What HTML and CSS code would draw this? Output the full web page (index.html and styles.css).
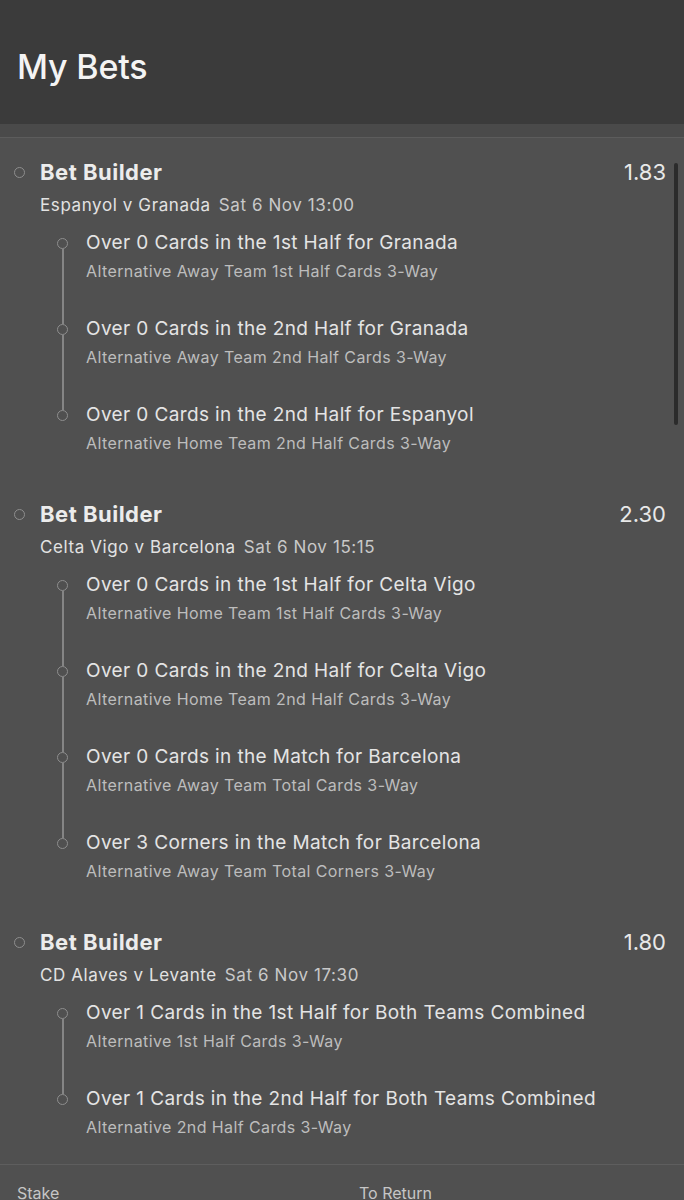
FILE: index.html
```html
<!DOCTYPE html>
<html>
<head>
<meta charset="utf-8">
<link rel="stylesheet" href="styles.css">
</head>
<body>
<header class="topbar"><h1 class="title">My Bets</h1></header>
<div class="strip"></div>
<main class="content">
  <div class="scrollbar"></div>

  <section class="group">
    <div class="group-head">
      <span class="dot"></span>
      <span class="group-name">Bet Builder</span>
      <span class="odds">1.83</span>
    </div>
    <div class="match"><span class="teams">Espanyol v Granada</span><span class="date">Sat 6 Nov 13:00</span></div>
    <div class="legs">
      <div class="leg"><span class="leg-dot"></span><div class="leg-text"><div class="leg-title">Over 0 Cards in the 1st Half for Granada</div><div class="leg-sub">Alternative Away Team 1st Half Cards 3-Way</div></div></div>
      <div class="leg"><span class="leg-dot"></span><div class="leg-text"><div class="leg-title">Over 0 Cards in the 2nd Half for Granada</div><div class="leg-sub">Alternative Away Team 2nd Half Cards 3-Way</div></div></div>
      <div class="leg"><span class="leg-dot"></span><div class="leg-text"><div class="leg-title">Over 0 Cards in the 2nd Half for Espanyol</div><div class="leg-sub">Alternative Home Team 2nd Half Cards 3-Way</div></div></div>
    </div>
  </section>

  <section class="group">
    <div class="group-head">
      <span class="dot"></span>
      <span class="group-name">Bet Builder</span>
      <span class="odds">2.30</span>
    </div>
    <div class="match"><span class="teams">Celta Vigo v Barcelona</span><span class="date">Sat 6 Nov 15:15</span></div>
    <div class="legs">
      <div class="leg"><span class="leg-dot"></span><div class="leg-text"><div class="leg-title">Over 0 Cards in the 1st Half for Celta Vigo</div><div class="leg-sub">Alternative Home Team 1st Half Cards 3-Way</div></div></div>
      <div class="leg"><span class="leg-dot"></span><div class="leg-text"><div class="leg-title">Over 0 Cards in the 2nd Half for Celta Vigo</div><div class="leg-sub">Alternative Home Team 2nd Half Cards 3-Way</div></div></div>
      <div class="leg"><span class="leg-dot"></span><div class="leg-text"><div class="leg-title">Over 0 Cards in the Match for Barcelona</div><div class="leg-sub">Alternative Away Team Total Cards 3-Way</div></div></div>
      <div class="leg"><span class="leg-dot"></span><div class="leg-text"><div class="leg-title">Over 3 Corners in the Match for Barcelona</div><div class="leg-sub">Alternative Away Team Total Corners 3-Way</div></div></div>
    </div>
  </section>

  <section class="group">
    <div class="group-head">
      <span class="dot"></span>
      <span class="group-name">Bet Builder</span>
      <span class="odds">1.80</span>
    </div>
    <div class="match"><span class="teams">CD Alaves v Levante</span><span class="date">Sat 6 Nov 17:30</span></div>
    <div class="legs">
      <div class="leg"><span class="leg-dot"></span><div class="leg-text"><div class="leg-title">Over 1 Cards in the 1st Half for Both Teams Combined</div><div class="leg-sub">Alternative 1st Half Cards 3-Way</div></div></div>
      <div class="leg"><span class="leg-dot"></span><div class="leg-text"><div class="leg-title">Over 1 Cards in the 2nd Half for Both Teams Combined</div><div class="leg-sub">Alternative 2nd Half Cards 3-Way</div></div></div>
    </div>
  </section>
</main>
<footer class="footer">
  <span class="foot-label">Stake</span>
  <span class="foot-label">To Return</span>
</footer>
</body>
</html>
```

FILE: styles.css
```css
* { box-sizing: border-box; margin: 0; padding: 0; }
html, body { background: #505050; }
body {
  font-family: Inter, Roboto, "Noto Sans", sans-serif;
  color: #e6e6e6;
  width: 684px;
  height: 1200px;
  overflow: hidden;
}
.topbar {
  height: 124px;
  background: #3b3b3b;
  display: flex;
  align-items: center;
  padding-left: 17px;
}
.title {
  font-size: 34px;
  font-weight: 500;
  color: #f4f4f4;
  letter-spacing: -0.2px;
  margin-top: 8px;
}
.strip {
  height: 14px;
  background: #4a4a4a;
  border-bottom: 1px solid #5c5c5c;
}
.content {
  position: relative;
  padding-top: 18px;
  height: 1026px;
  overflow: hidden;
}
.scrollbar {
  position: absolute;
  right: 6px;
  top: 25px;
  width: 4px;
  height: 262px;
  border-radius: 2px;
  background: #2b2b2b;
}
.group { padding: 0 18px 11px 14px; }
.group-head {
  display: flex;
  align-items: center;
  height: 32px;
}
.dot {
  width: 11px;
  height: 11px;
  border: 1.5px solid #8e8e8e;
  border-radius: 50%;
  margin-right: 15px;
  flex: none;
}
.group-name {
  font-size: 22px;
  font-weight: 700;
  color: #ececec;
  letter-spacing: 0.5px;
  flex: 1;
}
.odds {
  font-size: 22px;
  font-weight: 400;
  color: #e8e8e8;
}
.match {
  padding-left: 26px;
  height: 33px;
  display: flex;
  align-items: center;
  gap: 8px;
  font-size: 17px;
  letter-spacing: 0.6px;
  margin-bottom: 8px;
}
.teams { color: #e2e2e2; }
.date { color: #c9c9c9; }
.legs { padding-left: 43px; }
.leg {
  position: relative;
  display: flex;
  gap: 18px;
  margin-bottom: 30px;
}
.leg:not(:last-child)::after {
  content: "";
  position: absolute;
  left: 4.5px;
  top: 20px;
  width: 2px;
  height: 75px;
  background: #858585;
}
.leg-dot {
  flex: none;
  width: 11px;
  height: 11px;
  margin-top: 9px;
  border: 1.5px solid #8e8e8e;
  border-radius: 50%;
}
.leg-title {
  font-size: 19px;
  line-height: 28px;
  color: #e4e4e4;
  letter-spacing: 0.38px;
}
.leg-sub {
  font-size: 16px;
  line-height: 28px;
  color: #bdbdbd;
  letter-spacing: 0.4px;
}
.footer {
  position: relative;
  border-top: 1px solid #5e5e5e;
  display: grid;
  grid-template-columns: 342px 1fr;
  padding: 18px 17px 0;
}
.foot-label {
  font-size: 16px;
  color: #c6c6c6;
}
```
